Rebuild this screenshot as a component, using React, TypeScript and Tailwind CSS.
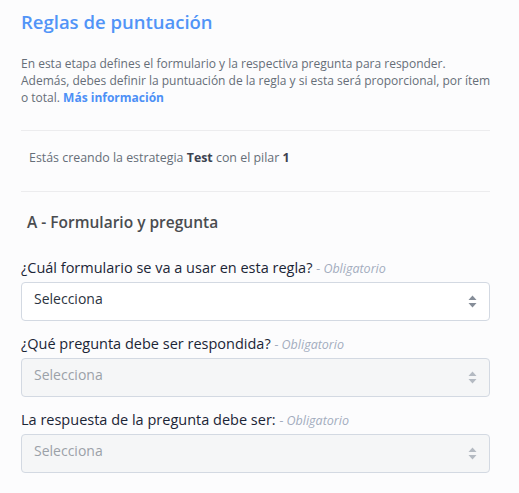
import React from 'react'

const font = { fontFamily: '"Open Sans", "Noto Sans", sans-serif' }

function Arrows({ muted }: { muted?: boolean }) {
  return (
    <svg width="9" height="13" viewBox="0 0 9 13" className={muted ? 'text-[#b4bac2]' : 'text-[#858d98]'}>
      <path d="M4.5 0.5 L8.5 5 L0.5 5 Z" fill="currentColor" />
      <path d="M0.5 8 L8.5 8 L4.5 12.5 Z" fill="currentColor" />
    </svg>
  )
}

function Field({ label, disabled, className }: { label: string; disabled?: boolean; className?: string }) {
  return (
    <div className={className}>
      <label className="block text-[14.5px] leading-[18px] text-[#1b2536]">
        {label} <span className="italic text-[12.5px] text-[#a3acbd]">- Obligatorio</span>
      </label>
      <div
        className={
          'mt-[4px] h-[39px] rounded-[4px] border border-[#d3d9e2] flex items-center justify-between pl-[12px] pr-[12px] ' +
          (disabled ? 'bg-[#f5f6f7] text-[#9ba1a8]' : 'bg-white text-[#2b3340]')
        }
      >
        <span className="text-[14px] mb-[6px]">Selecciona</span>
        <Arrows muted={disabled} />
      </div>
    </div>
  )
}

export default function App() {
  return (
    <div className="min-h-[493px] w-[519px] bg-[#fcfcfd]" style={font}>
      <div className="w-[490px] pl-[21px] pt-[10px]">
        <h1 className="text-[18.5px] leading-6 font-semibold text-[#5194f7]">Reglas de puntuación</h1>
        <p className="mt-[21px] w-[474px] text-[12px] leading-[17px] text-[#666e78]">
          En esta etapa defines el formulario y la respectiva pregunta para responder. Además, debes definir la
          puntuación de la regla y si esta será proporcional, por ítem o total.{' '}
          <a className="font-bold text-[#4d90f6]">Más información</a>
        </p>

        <div className="mt-[24px] border-t border-[#ececee]" />
        <p className="mt-[18px] pl-[8px] text-[12.4px] leading-[17px] text-[#666e78]">
          Estás creando la estrategia <b className="text-[#3c4350]">Test</b> con el pilar{' '}
          <b className="text-[#3c4350]">1</b>
        </p>
        <div className="mt-[25px] border-t border-[#ececee]" />

        <h2 className="mt-[20px] pl-[6px] text-[15.5px] leading-5 font-semibold text-[#4a4c50]">
          A - Formulario y pregunta
        </h2>

        <Field className="mt-[27px]" label="¿Cuál formulario se va a usar en esta regla?" />
        <Field className="mt-[14px]" label="¿Qué pregunta debe ser respondida?" disabled />
        <Field className="mt-[14px]" label="La respuesta de la pregunta debe ser:" disabled />
      </div>
    </div>
  )
}
